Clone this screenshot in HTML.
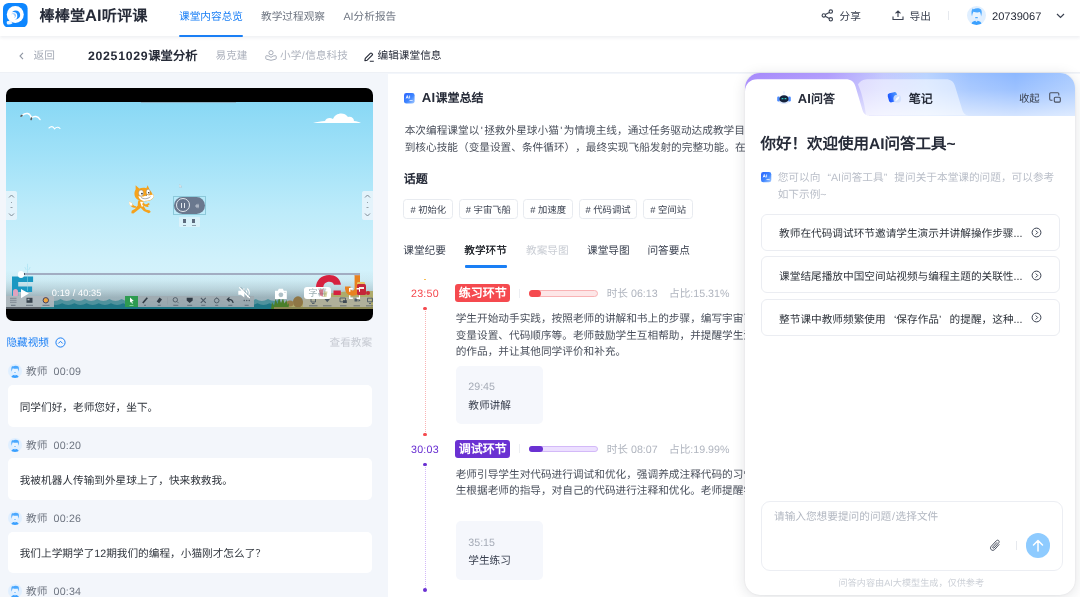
<!DOCTYPE html>
<html lang="zh-CN">
<head>
<meta charset="utf-8">
<title>棒棒堂AI听评课</title>
<style>
*{box-sizing:border-box;margin:0;padding:0}
html,body{width:1080px;height:597px;overflow:hidden;background:#f3f6fb;font-family:"Liberation Sans",sans-serif;color:#1f2329;font-size:10.67px;text-rendering:geometricPrecision;text-spacing-trim:space-all}
.abs{position:absolute;white-space:nowrap}
.t{position:absolute;white-space:nowrap;font-size:10.67px;line-height:14px;height:14px}
.b{font-weight:bold}
#hdr{position:absolute;left:0;top:0;width:1080px;height:36px;background:#fff;box-shadow:0 2px 3px rgba(40,60,100,.075);z-index:5}
#sub{position:absolute;left:0;top:36px;width:1080px;height:37px;background:#fff;border-bottom:1px solid #eef1f6}
#left{position:absolute;left:0;top:73px;width:381px;height:524px;background:#f3f6fb;overflow:hidden}
#mid{position:absolute;left:387.5px;top:73.5px;width:693px;height:524px;background:#fff;overflow:hidden}
#ai{position:absolute;left:745.4px;top:73px;width:330px;height:521.7px;background:#fff;border-radius:15px;box-shadow:0 2px 14px rgba(20,30,50,.13),0 0 2px rgba(20,30,50,.08);overflow:hidden;z-index:4}
.av{position:absolute;width:14px;height:14px}
.card{position:absolute;left:7.5px;width:364px;height:41.5px;background:#fff;border-radius:5px}
.tag{position:absolute;top:125.5px;height:20px;border:1px solid #e8ebf0;border-radius:3.5px;font-size:9.33px;line-height:18px;padding-top:1px;text-align:center;color:#3a4150;white-space:nowrap;overflow:hidden}
.p{position:absolute;font-size:10.67px;color:#4a505c;white-space:nowrap;overflow:hidden}
.fw{display:inline-block;width:1em}
.hq{display:inline-block;width:.46em;text-align:center}
.sug{position:absolute;left:15.6px;width:298.6px;height:37px;border:1px solid #ebedf2;border-radius:6px;background:#fff}
</style>
</head>
<body>
<div id="wrap" style="position:absolute;left:0;top:0;width:1080px;height:597px;overflow:hidden;will-change:transform">

<div id="hdr">
  <svg class="abs" style="left:3px;top:2.800px" width="24.600" height="24.600" viewBox="0 0 24.600 24.600">
    <rect x="0" y="0" width="24.600" height="24.600" rx="5.500" fill="#0d86ff"/>
    <circle cx="12.300" cy="11.600" r="8.500" fill="#fff"/>
    <path d="M4 18.200L7.800 17.500L9.500 20.500C7.500 21.600 5.500 21.800 4.200 21.300C3.600 20.300 3.600 19.200 4 18.200z" fill="#eef6ff"/>
    <circle cx="12.700" cy="11.900" r="4.500" fill="#1a8cff"/>
    <circle cx="10.400" cy="13" r="3.900" fill="#fff"/>
    <circle cx="10.600" cy="12.600" r="2.400" fill="#8cc3ff"/>
    <circle cx="9.500" cy="13.300" r="2.200" fill="#fff"/>
  </svg>
  <div id="title" class="abs b" style="left:39.5px;top:6.2px;font-size:15.2px;line-height:21px;color:#262b38">棒棒堂<span style="font-size:1.09em;letter-spacing:.1px;line-height:1">AI</span>听评课</div>
  <div id="tab1" class="t" style="left:179px;top:9.700px;color:#1a7ff5">课堂内容总览</div>
  <div class="abs" style="left:179px;top:34.5px;width:64px;height:2.200px;background:#1a7ff5;border-radius:1px"></div>
  <div id="tab2" class="t" style="left:261px;top:9.700px;color:#6f7682">教学过程观察</div>
  <div id="tab3" class="t" style="left:343.5px;top:9.700px;color:#6f7682">AI分析报告</div>
  <svg class="abs" style="left:821px;top:9px" width="13" height="13" viewBox="0 0 13 13" fill="none" stroke="#3a4150" stroke-width="1.100"><circle cx="9.800" cy="2.600" r="1.700"/><circle cx="2.800" cy="6.400" r="1.700"/><circle cx="9.800" cy="10.300" r="1.700"/><path d="M4.300 5.600L8.300 3.400M4.300 7.200L8.300 9.500"/></svg>
  <div id="share" class="t" style="left:839.5px;top:9.700px;color:#3a4150">分享</div>
  <svg class="abs" style="left:891.5px;top:10px" width="12" height="11" viewBox="0 0 12 11" fill="none" stroke="#3a4150" stroke-width="1.100"><path d="M1 6.500V9.500H11V6.500M6 7V1M3.500 3.300L6 .9L8.500 3.300"/></svg>
  <div id="export" class="t" style="left:909.5px;top:9.700px;color:#3a4150">导出</div>
  <div class="abs" style="left:948px;top:11px;width:1px;height:9px;background:#e6e9ee"></div>
  <svg class="abs" style="left:967px;top:6px" width="19" height="19" viewBox="0 0 20 20"><defs><clipPath id="ch"><circle cx="10" cy="10" r="10"/></clipPath></defs><circle cx="10" cy="10" r="10" fill="#e0efff"/><g clip-path="url(#ch)"><path d="M4 21C4 17.500 6.500 15.500 10 15.300C13.500 15.500 16 17.500 16 21z" fill="#3aa0ff"/><path d="M8.800 13.500h2.400v2.200L10 16.800L8.800 15.700z" fill="#dcecff"/><ellipse cx="10" cy="9.300" rx="3.700" ry="4.400" fill="#e9f4ff"/><path d="M5.300 11C4.300 7.500 4.600 4.300 6 2.700L7 3.500C9 2.100 13 2.100 14.800 3.700C15.900 5.500 15.700 8.500 14.800 11C14.700 8.800 14.200 7.300 13.500 6.400C11.500 7 8.700 6.800 6.800 6C6 7.300 5.500 8.800 5.300 11z" fill="#4aa8ff"/><ellipse cx="10" cy="12.300" rx="1.700" ry=".6" fill="#4aa8ff"/></g></svg>
  <div id="uid" class="t" style="left:992px;top:9.700px;font-size:11.1px;color:#262b38">20739067</div>
  <svg class="abs" style="left:1056px;top:13px" width="9" height="6" viewBox="0 0 9 6" fill="none" stroke="#3a4150" stroke-width="1.200"><path d="M1 1L4.500 4.500L8 1"/></svg>
</div>
<div id="sub">
  <svg class="abs" style="left:19px;top:15.500px" width="5" height="8" viewBox="0 0 5 8" fill="none" stroke="#8f96a3" stroke-width="1.100"><path d="M4 .8L1 4L4 7.200"/></svg>
  <div id="back" class="t" style="left:33.5px;top:13px;color:#a5abb6">返回</div>
  <div id="ctitle" class="abs b" style="left:88px;top:10.5px;font-size:12.3px;line-height:18px;color:#262b38"><span style="letter-spacing:.7px">20251029</span>课堂分析</div>
  <div id="tname" class="t" style="left:215.5px;top:13px;color:#aeb3be">易克建</div>
  <svg class="abs" style="left:265.300px;top:13.800px" width="12" height="11" viewBox="0 0 12 11" fill="none" stroke="#a6acb8" stroke-width="1" stroke-linejoin="round"><circle cx="6" cy="2.700" r="2.100"/><path d="M.8 6.300Q.8 5.700 1.400 5.700L3.900 6L6 7.400L8.100 6L10.600 5.700Q11.200 5.700 11.200 6.300V8.500Q11.200 9.100 10.600 9.200L6 10.300L1.400 9.200Q.8 9.100 .8 8.500z"/></svg>
  <div id="subj" class="t" style="left:280px;top:13px;color:#aeb3be">小学<span style="padding:0 .5px">/</span>信息科技</div>
  <svg class="abs" style="left:364px;top:15.700px" width="10.500" height="10" viewBox="0 0 10.500 10" fill="none" stroke="#262b38" stroke-width="1.150" stroke-linejoin="round"><path d="M1.300 6.300L6.300 1.300Q7 .6 7.700 1.300L8.200 1.800Q8.900 2.500 8.200 3.200L3.200 8.200L.9 8.700zM5.800 9.200H9.800"/></svg>
  <div id="edit" class="t" style="left:377.5px;top:13px;color:#262b38">编辑课堂信息</div>
</div>

<div id="left">

  <div id="vid" style="position:absolute;left:6px;top:15px;width:367px;height:233px;background:#000;border-radius:7px;overflow:hidden">
    <div id="sky" style="position:absolute;left:0;top:13.5px;width:367px;height:207.2px;background:linear-gradient(180deg,#89d8f5 0%,#a2e2f8 27%,#bcebfa 52%,#d0f1fb 76%,#dbf5fc 100%);overflow:hidden">
      <!-- top thin gray line -->
      <div class="abs" style="left:135px;top:0;width:95px;height:1px;background:#8a9aa6;opacity:.6"></div>
      <!-- birds -->
      <svg class="abs" style="left:14px;top:9px" width="48" height="22" viewBox="0 0 48 22" fill="none" stroke="#fff" stroke-width="1.500" stroke-linecap="round"><path d="M2 4.500C6 1 10 2 11.500 7C14 4.500 18 5 20 8.500"/><path d="M2 4.500l-1 .6M11.500 7l-.4 1.500" stroke="#555"/><path d="M29 17c2-2 4-2 5.500.8c2-2 4-2 5.500-.3" stroke-width="1.100"/></svg>
      <!-- cloud -->
      <svg class="abs" style="left:306px;top:8px" width="50" height="14" viewBox="0 0 50 14"><path d="M1 13c4-1.500 8-1.500 12-2c1-3 5-4 8-2c2-6 11-8 15-2c3-1 6 1 6 4c3 0 5 1 7 2z" fill="#fff"/></svg>
      <!-- side widgets -->
      <div class="abs" style="left:0;top:89px;width:11px;height:29px;background:rgba(235,245,250,.85);border-radius:0 2px 2px 0"></div>
      <div class="abs" style="left:356px;top:89px;width:11px;height:29px;background:rgba(235,245,250,.85);border-radius:2px 0 0 2px"></div>
      <svg class="abs" style="left:2px;top:91px" width="7" height="25" viewBox="0 0 7 25" fill="none" stroke="#7c8a96" stroke-width="1"><path d="M1 4.500L3.500 2L6 4.500M1 20.500L3.500 23L6 20.500"/><path d="M3 9.500h1M2.500 14.500h2" stroke-width=".8"/></svg>
      <svg class="abs" style="left:358px;top:91px" width="7" height="25" viewBox="0 0 7 25" fill="none" stroke="#7c8a96" stroke-width="1"><path d="M1 4.500L3.500 2L6 4.500M1 20.500L3.500 23L6 20.500"/><path d="M3 9.500h1M2.500 14.500h2" stroke-width=".8"/></svg>
      <!-- cat -->
      <svg class="abs" style="left:121.500px;top:81.700px" width="27.500" height="32.300" viewBox="0 0 27 30" preserveAspectRatio="none">
        <path d="M8 21.500C6 21.500 4.500 20 3.800 18.500L1.200 17.200C.8 19 1.500 20.800 3 21.500C4.500 23 6.500 23.300 8.500 23z" fill="#f5a21c"/>
        <path d="M1.200 17.200L3.800 18.500L4.600 20.800L2.500 21.200C1.300 20.300 .9 18.800 1.200 17.200z" fill="#fff"/>
        <path d="M9.500 21L7 24L3.600 25.800L3.300 28L5.300 28.400L8.500 26L12.500 23z" fill="#f5a21c"/>
        <path d="M12 22.500L15.500 26L20.500 28L22.300 27L21.500 25.500L17.500 24.500L15 21z" fill="#f5a21c"/>
        <path d="M10.300 16C9.300 18.500 9.300 21 10.500 23.500L15 22.500C15.800 20.500 15.500 18.500 14.800 16.500z" fill="#f5a21c"/>
        <path d="M11.800 17.500L13.500 22L15 21.500L15 17.500z" fill="#fff"/>
        <path d="M14.500 18.200L17.500 20L20.500 18.600L21.400 19.800L19.500 20.800L20.500 21.500L19.300 22.300L17 21.800L14 20.500z" fill="#f5a21c"/>
        <path d="M7.500 2L11 5C13.500 4.200 16 4.200 18 4.800L19.300 2L21.300 6.500C22.500 7.500 23.500 9 24 10.500C25 10.800 25.500 11.500 25.300 12.500C24.500 15.500 20.500 17 16 17C11.500 17 7.300 15 6.500 11.500C6 9.500 6.500 7.500 7.500 6z" fill="#f5a21c"/>
        <path d="M10.300 12C10.800 15.500 14 16.800 17.500 16.600C21 16.400 24.300 15 25.200 12.500C25.300 11.500 24.800 10.900 24 10.600C22.500 11.500 20.500 11.500 19 10.800C17 12.500 13 13 10.300 12z" fill="#fff"/>
        <ellipse cx="12.800" cy="9.300" rx="2.400" ry="2.800" fill="#fff" stroke="#555" stroke-width=".3"/>
        <ellipse cx="19.800" cy="8.400" rx="1.900" ry="2.600" fill="#fff" stroke="#555" stroke-width=".3"/>
        <circle cx="13.700" cy="9.800" r=".8" fill="#222"/><circle cx="20.300" cy="9" r=".7" fill="#222"/>
        <path d="M17.300 11.300L18.500 11L18 12z" fill="#333"/>
        <path d="M12.800 13.300C15 15.300 19.500 15 22 12.700" fill="none" stroke="#444" stroke-width=".45"/>
      </svg>
      <!-- cursor -->
      <svg class="abs" style="left:173.300px;top:82.300px" width="3.300" height="4.600" viewBox="0 0 5 7"><path d="M.5.500V5.500L2 4.200L3 6.500L3.800 6.100L2.800 3.900H4.500z" fill="#e8f1f6" stroke="#9fb0bb" stroke-width=".4"/></svg>
      <!-- pill -->
      <div class="abs" style="left:167.300px;top:94.500px;width:32.600px;height:18.700px;border:0.600px solid #8cc9da"></div>
      <div class="abs" style="left:168.300px;top:95.400px;width:30.600px;height:16.900px;border-radius:9px;background:#6a788e"></div>
      <div class="abs" style="left:170px;top:96.900px;width:13.800px;height:13.800px;border-radius:7px;border:1px solid #e4e9ef;background:#65738a"></div>
      <div class="abs" style="left:175px;top:101.100px;width:1.200px;height:5.500px;background:#e4e9ef"></div>
      <div class="abs" style="left:177.600px;top:101.100px;width:1.200px;height:5.500px;background:#e4e9ef"></div>
      <svg class="abs" style="left:188.500px;top:101.500px" width="5" height="6" viewBox="0 0 5 6" fill="none" stroke="#cfd6df" stroke-width=".8"><path d="M1 3h3M3 .800v4.400M1.500 1.500L.8 3l.7 1.500"/></svg>
      <!-- small buttons -->
      <div class="abs" style="left:173.300px;top:115.300px;width:20.400px;height:10px;background:rgba(225,243,250,.75);border-radius:1px"></div>
      <div class="abs" style="left:176.500px;top:117.500px;width:3.500px;height:3.800px;background:#5d6b7d"></div>
      <div class="abs" style="left:186.300px;top:117.500px;width:3px;height:3.800px;background:#5d6b7d"></div>
      <div class="abs" style="left:176.500px;top:123px;width:3.500px;height:1.200px;background:#8fa0ae"></div>
      <div class="abs" style="left:186px;top:123px;width:3.500px;height:1.200px;background:#8fa0ae"></div>

      <!-- bottom scene -->
      <!-- dark control gradient -->
      <div class="abs" style="left:0;top:168px;width:367px;height:40px;background:linear-gradient(180deg,rgba(20,30,40,0) 0%,rgba(20,30,40,.04) 25%,rgba(20,30,40,.15) 48%,rgba(20,30,40,.3) 68%,rgba(20,30,40,.36) 100%)"></div>
      <svg class="abs" style="left:0;top:0" width="367" height="208" viewBox="0 0 367 208">
        <path d="M42.400 207.500V197.100q6.100 3.800 12.200 0q6.100 3.800 12.200 0q6.100 3.800 12.200 0q6.100 3.800 12.200 0q6.100 3.800 12.200 0q6.100 3.800 12.200 0q6.100 3.800 12.200 0q6.100 3.800 12.200 0q6.100 3.800 12.200 0q6.100 3.800 12.200 0q6.100 3.800 12.200 0q6.100 3.800 12.200 0q6.100 3.800 12.200 0q6.100 3.800 12.200 0q6.100 3.800 12.200 0q6.100 3.800 12.200 0q6.100 3.800 12.200 0q6.100 3.800 12.200 0q6.100 3.800 12.200 0V207.500z" fill="#4f929d"/>
        <path d="M44 207.500V201.300q6.100 3.400 12.200 0q6.100 3.400 12.200 0q6.100 3.400 12.200 0q6.100 3.400 12.200 0q6.100 3.400 12.200 0q6.100 3.400 12.200 0q6.100 3.400 12.200 0q6.100 3.400 12.200 0q6.100 3.400 12.200 0q6.100 3.400 12.200 0q6.100 3.400 12.200 0q6.100 3.400 12.200 0q6.100 3.400 12.200 0q6.100 3.400 12.200 0q6.100 3.400 12.200 0q6.100 3.400 12.200 0q6.100 3.400 12.200 0q6.100 3.400 12.200 0q6.100 3.400 12.200 0V207.500z" fill="#1f7787"/>
        <path d="M268 207.5L279 203.0L297 199.0L314 194.0L329 190.5L344 189.3L367 189.0L367 207.5z" fill="#aeab6c"/>
        <ellipse cx="292" cy="200" rx="5" ry="5.800" fill="#8f7645"/>
        <ellipse cx="284" cy="201.500" rx="3.500" ry="3" fill="#977e4c"/>
        <path d="M265 207.500L266 200L268 204L269.500 197L271.500 202L273 196L275 201L277 196.500L278.500 201.500L280.500 198L281.500 203L283 201L282.500 207.500z" fill="#4a7f2a"/>
      </svg>
      <!-- C red -->
      <svg class="abs" style="left:309.500px;top:173.500px" width="25" height="24" viewBox="0 0 25 24"><path d="M24.800 8.800C23.600 3.300 19.300 0 13.300 0C5.300 0 0 5.300 0 12.500C0 18.500 3 22.500 7 24H14.500C10 23.500 7.300 19.500 7.300 13C7.300 9 9.800 6.800 13.300 6.800C15.800 6.800 17.300 8 18 9.800L24.800 9.800z" fill="#d6213f"/><path d="M17.500 15.500H24.800V20H17.500z" fill="#d6213f"/></svg>
      <!-- J orange -->
      <svg class="abs" style="left:338.800px;top:171px" width="15.500" height="23" viewBox="0 0 15.500 23"><path d="M9.600 0H15.200V15C15.200 20 12 22.700 7.800 22.700C3.500 22.700 .5 20.300 0 15.800L0 13.500H5.500V15.500C5.700 16.800 6.500 17.400 7.600 17.400C8.900 17.400 9.600 16.500 9.600 15z" fill="#e8811f"/><path d="M9.600 0H15.200V2.500H9.600z" fill="#d9a07a"/></svg>
      <!-- jar -->
      <div class="abs" style="left:350.500px;top:182.500px;width:9.500px;height:10.700px;background:#c5263a;border-radius:1.500px"></div>
      <div class="abs" style="left:351.300px;top:180.300px;width:8px;height:2.600px;background:#e6c565;border-radius:1.200px 1.200px 0 0"></div>
      <div class="abs" style="left:352.500px;top:185px;width:5.500px;height:2.600px;background:#f4ece4"></div>
      <div class="abs" style="left:359.500px;top:189.300px;width:4px;height:4.500px;background:#c32a36;border-radius:2px"></div>
      <!-- F teal -->
      <svg class="abs" style="left:5.900px;top:160px" width="22" height="36" viewBox="0 0 22 36"><path d="M0 14.400H21.100V20H6.200V24.600H20.100V29.900H6.200V33.700H0z" fill="#1a98c2"/><path d="M15.500 14.400V4M12.800 5l1.500 3M18.200 5l-1.500 3M15.500 1.800v2.500M15.500 14.400V29" stroke="#9adcee" stroke-width=".6" fill="none" opacity=".8"/></svg>
      <div class="abs" style="left:6.600px;top:187.700px;width:5.600px;height:6.600px;background:#dfa3bf;border-radius:3px 3px 1px 1px"></div>
      <!-- toolbars -->
      <div class="abs" style="left:0;top:194.500px;width:48.300px;height:10.900px;background:rgba(176,184,190,.92)"></div>
      <div class="abs" style="left:0;top:205.300px;width:35px;height:2px;background:#5b6168"></div>
      <div class="abs" style="left:35px;top:205.300px;width:13.300px;height:2px;background:#2a7f8c"></div>
      <div class="abs" style="left:118.700px;top:194.300px;width:13.600px;height:11.400px;background:#2e9b51"></div>
      <div class="abs" style="left:132.300px;top:194.300px;width:116px;height:11.400px;background:rgba(160,171,178,.93)"></div>
      <div class="abs" style="left:297px;top:195.200px;width:67.500px;height:10.600px;background:rgba(176,176,158,.92)"></div>
      <div class="abs" style="left:268px;top:205.800px;width:99px;height:1.500px;background:#8a8752"></div>
      <svg class="abs" style="left:0;top:194.500px" width="367" height="13" viewBox="0 0 367 13" fill="none" stroke="#4c5964" stroke-width=".9">
        <path d="M4 2.300h6.500M4 4.300h6.500M4 6.300h6.500" stroke="#7a858e"/><path d="M5 9.300h4.500" stroke-width=".7"/>
        <rect x="20.500" y="1.800" width="6" height="5" fill="#37424d" stroke="none"/><rect x="21.500" y="2.800" width="2" height="1.500" fill="#aab3ba" stroke="none"/><path d="M20 9.300h7" stroke-width=".7"/>
        <circle cx="39.800" cy="4.300" r="2.700" fill="#f0a53c" stroke="#3d3f63" stroke-width="1"/><path d="M36.500 9.300h7" stroke-width=".7"/>
        <path d="M124 1.500l3.800 3.500-1.900.2 1 2.100-.9.400-1-2.100-1 1.100z" fill="#fff" stroke="none"/><path d="M123.500 9.500h4" stroke="#8fe0a5" stroke-width=".8"/>
        <path d="M161.500 1.500v7" stroke="#8f9aa2" stroke-width=".5"/>
        <g transform="translate(139,0)"><path d="M-2.200 7L2.300 1.800" stroke="#2f3a44" stroke-width="1.600"/><path d="M-1 9.300h2" stroke-width=".7"/></g><g transform="translate(153.2,0)"><path d="M-2.500 5.500L.3 1.500L2.800 3.500L0 7.300z" fill="#2f3a44" stroke="none"/><path d="M-1.500 9.300h3" stroke-width=".7"/></g><g transform="translate(169.8,0)"><circle cx="-.5" cy="3.800" r="2.200"/><path d="M1.200 5.500L2.800 7.200M-2.500 9.300h5" stroke-width=".7"/></g><g transform="translate(183.7,0)"><path d="M-3 1.800h6v2.700L0 7L-3 4.500z" fill="#2f3a44" stroke="none"/><path d="M-2.500 9.300h5" stroke-width=".7"/></g><g transform="translate(197.3,0)"><path d="M-2.500 1.800L2.500 6.800M2.500 1.800L-2.500 6.800" stroke-width="1.100"/><path d="M-2 9.300h4" stroke-width=".7"/></g><g transform="translate(210.7,0)"><circle cx="0" cy="4.600" r="2.300"/><path d="M0 2.300V1.200M-1.500 9.300h3" stroke-width=".7"/></g><g transform="translate(224.3,0)"><path d="M2.800 7C2.300 4.300 .5 3.300-2 3.500M-.8 1.500L-3 3.500L-.8 5.500" stroke="#2f3a44" stroke-width="1.200"/><path d="M-2 9.300h4" stroke-width=".7"/></g><g transform="translate(240.7,0)"><path d="M-2.500 4.500h.1M0 4.500h.1M2.500 4.500h.1" stroke-width="1.300" stroke-linecap="round"/><path d="M-2 9.300h4" stroke-width=".7"/></g>
        <path d="M305 2.500h4.500v3.500H305zM306 7.500h2.500"/><path d="M303 9.800h8.500" stroke-width=".7"/>
        <path d="M318.500 3h5.500l-2.750 3.200z" fill="#4c5964" stroke="none"/><path d="M317 9.800h8.500" stroke-width=".7"/>
        <path d="M334 2h5.500v3.800H334z"/><rect x="337" y="4.200" width="3.800" height="2.800" fill="#3f4a54" stroke="none"/><path d="M334 9.800h6.500" stroke-width=".7"/>
        <path d="M348.500 2.500h3v3h-3zM352.500 3.200l2 1.300-2 1.300z" fill="#4c5964" stroke="none"/><path d="M347.500 9.800h6.500" stroke-width=".7"/>
        <path d="M361.500 2.200h5v3.600h-5zM363 7.500h2"/><path d="M360 9.800h8" stroke-width=".7"/>
      </svg>
      <!-- progress bar -->
      <div class="abs" style="left:15px;top:171.800px;width:338.500px;height:2.200px;background:#a2adc2;border-radius:1px"></div>
      <div class="abs" style="left:17px;top:171.800px;width:2px;height:2.200px;background:#4a5666"></div>
      <div class="abs" style="left:11.600px;top:169.500px;width:6.600px;height:6.600px;background:#fff;border-radius:4px"></div>
      <!-- play -->
      <svg class="abs" style="left:15.300px;top:187.200px" width="8" height="9.200" viewBox="0 0 8 9.200"><path d="M0 0L7.900 4.600L0 9.200z" fill="#fff"/></svg>
      <div id="vtime" class="abs" style="left:45.800px;top:186.500px;font-size:9.200px;line-height:10px;color:#fff;letter-spacing:.1px">0:19 / 40:35</div>
      <!-- mute -->
      <svg class="abs" style="left:232px;top:185.500px" width="13" height="11.500" viewBox="0 0 13 11.500"><path d="M.3 3.800H2.800L6.300 1V10.500L2.800 7.700H.3z" fill="#fff"/><path d="M7.800 3.500c1.300 1.200 1.300 3.300 0 4.500M9.300 1.500c2.700 2.300 2.700 6.200 0 8.500" fill="none" stroke="#fff" stroke-width="1.100"/><path d="M1.300 .3L11.800 11" stroke="#fff" stroke-width="1.300"/><path d="M2.200 -.3L12.700 10.400" stroke="#7f97a1" stroke-width=".7"/></svg>
      <!-- camera -->
      <svg class="abs" style="left:269px;top:186px" width="12" height="11.300" viewBox="0 0 12 11.300"><path d="M0 2.800H2.800L3.800 .8H7.800L8.800 2.800H11.800V11.200H0z" fill="#fff"/><circle cx="5.900" cy="6.800" r="2.400" fill="#aebfc6"/><circle cx="10" cy="4.300" r=".6" fill="#aebfc6"/></svg>
      <!-- subtitle button -->
      <div class="abs" style="left:297.900px;top:185.700px;width:27.600px;height:12.200px;background:#fff;border-radius:3px"></div>
      <div class="abs" style="left:302.300px;top:186.600px;font-size:9.300px;line-height:11px;color:#9fb0b4">字幕</div>
      <svg class="abs" style="left:309px;top:185.500px" width="17" height="13" viewBox="0 0 17 13"><path d="M4.200 3C5.300 2.300 6.800 2 8.300 2.200L7.800 9.500C6.800 9.300 5.800 9 5 8.500z" fill="#d6213f" opacity=".5"/><path d="M9 4.500h3.500l-1 5.500h-3z" fill="#b9b45f" opacity=".55"/></svg>
      <!-- fullscreen -->
      <svg class="abs" style="left:342.900px;top:186.500px" width="11.400" height="11" viewBox="0 0 11.400 11" fill="none" stroke="#fff" stroke-width="1.400"><path d="M.7 3.800V.7H3.800M7.600 .7H10.700V3.800M10.700 7.200V10.300H7.600M3.800 10.300H.7V7.200"/></svg>
    </div>
  </div>

  <div id="hidev" class="t" style="left:6.400px;top:263.300px;color:#1a7ff5">隐藏视频</div>
  <svg class="abs" style="left:54.800px;top:263.500px" width="11" height="11" viewBox="0 0 11 11"><circle cx="5.500" cy="5.500" r="4.600" fill="none" stroke="#1a7ff5" stroke-width="1"/><path d="M3.300 6.500L5.500 4.300L7.700 6.500" fill="none" stroke="#1a7ff5" stroke-width="1"/></svg>
  <div id="viewplan" class="t" style="left:329.500px;top:263.300px;color:#c6cad2">查看教案</div>
  <svg class="abs" style="left:8px;top:291.3px" width="14" height="14" viewBox="0 0 20 20"><defs><clipPath id="ct1"><circle cx="10" cy="10" r="10"/></clipPath></defs><circle cx="10" cy="10" r="10" fill="#e0efff"/><g clip-path="url(#ct1)"><path d="M4 21C4 17.500 6.500 15.500 10 15.300C13.500 15.500 16 17.500 16 21z" fill="#3aa0ff"/><path d="M8.800 13.500h2.400v2.200L10 16.800L8.800 15.700z" fill="#dcecff"/><ellipse cx="10" cy="9.300" rx="3.700" ry="4.400" fill="#e9f4ff"/><path d="M5.300 11C4.300 7.500 4.600 4.300 6 2.700L7 3.500C9 2.100 13 2.100 14.800 3.700C15.900 5.500 15.700 8.500 14.800 11C14.700 8.800 14.200 7.300 13.500 6.400C11.500 7 8.700 6.800 6.800 6C6 7.300 5.500 8.800 5.300 11z" fill="#4aa8ff"/><ellipse cx="10" cy="12.300" rx="1.700" ry=".6" fill="#4aa8ff"/></g></svg><div class="t" style="left:26px;top:292.3px;color:#6f7682">教师</div><div class="t" style="left:53.5px;top:292.3px;color:#6f7682;letter-spacing:.2px">00:09</div><div class="card" style="top:312.0px"><div class="t" style="left:12.2px;top:15.5px;color:#2f343c">同学们好，老师您好，坐下。</div></div>
  <svg class="abs" style="left:8px;top:364.6px" width="14" height="14" viewBox="0 0 20 20"><defs><clipPath id="ct2"><circle cx="10" cy="10" r="10"/></clipPath></defs><circle cx="10" cy="10" r="10" fill="#e0efff"/><g clip-path="url(#ct2)"><path d="M4 21C4 17.500 6.500 15.500 10 15.300C13.500 15.500 16 17.500 16 21z" fill="#3aa0ff"/><path d="M8.800 13.500h2.400v2.200L10 16.800L8.800 15.700z" fill="#dcecff"/><ellipse cx="10" cy="9.300" rx="3.700" ry="4.400" fill="#e9f4ff"/><path d="M5.300 11C4.300 7.500 4.600 4.300 6 2.700L7 3.500C9 2.100 13 2.100 14.800 3.700C15.900 5.500 15.700 8.500 14.800 11C14.700 8.800 14.200 7.300 13.500 6.400C11.500 7 8.700 6.800 6.800 6C6 7.300 5.500 8.800 5.300 11z" fill="#4aa8ff"/><ellipse cx="10" cy="12.300" rx="1.700" ry=".6" fill="#4aa8ff"/></g></svg><div class="t" style="left:26px;top:365.6px;color:#6f7682">教师</div><div class="t" style="left:53.5px;top:365.6px;color:#6f7682;letter-spacing:.2px">00:20</div><div class="card" style="top:385.3px"><div class="t" style="left:12.2px;top:15.5px;color:#2f343c">我被机器人传输到外星球上了，快来救救我。</div></div>
  <svg class="abs" style="left:8px;top:437.9px" width="14" height="14" viewBox="0 0 20 20"><defs><clipPath id="ct3"><circle cx="10" cy="10" r="10"/></clipPath></defs><circle cx="10" cy="10" r="10" fill="#e0efff"/><g clip-path="url(#ct3)"><path d="M4 21C4 17.500 6.500 15.500 10 15.300C13.500 15.500 16 17.500 16 21z" fill="#3aa0ff"/><path d="M8.800 13.500h2.400v2.200L10 16.800L8.800 15.700z" fill="#dcecff"/><ellipse cx="10" cy="9.300" rx="3.700" ry="4.400" fill="#e9f4ff"/><path d="M5.300 11C4.300 7.500 4.600 4.300 6 2.700L7 3.500C9 2.100 13 2.100 14.800 3.700C15.900 5.500 15.700 8.500 14.800 11C14.700 8.800 14.200 7.300 13.500 6.400C11.500 7 8.700 6.800 6.800 6C6 7.300 5.500 8.800 5.300 11z" fill="#4aa8ff"/><ellipse cx="10" cy="12.300" rx="1.700" ry=".6" fill="#4aa8ff"/></g></svg><div class="t" style="left:26px;top:438.9px;color:#6f7682">教师</div><div class="t" style="left:53.5px;top:438.9px;color:#6f7682;letter-spacing:.2px">00:26</div><div class="card" style="top:458.59999999999997px"><div class="t" style="left:12.2px;top:15.5px;color:#2f343c">我们上学期学了12期我们的编程，小猫刚才怎么了？</div></div>
  <svg class="abs" style="left:8px;top:511.20000000000005px" width="14" height="14" viewBox="0 0 20 20"><defs><clipPath id="ct4"><circle cx="10" cy="10" r="10"/></clipPath></defs><circle cx="10" cy="10" r="10" fill="#e0efff"/><g clip-path="url(#ct4)"><path d="M4 21C4 17.500 6.500 15.500 10 15.300C13.500 15.500 16 17.500 16 21z" fill="#3aa0ff"/><path d="M8.800 13.500h2.400v2.200L10 16.800L8.800 15.700z" fill="#dcecff"/><ellipse cx="10" cy="9.300" rx="3.700" ry="4.400" fill="#e9f4ff"/><path d="M5.300 11C4.300 7.500 4.600 4.300 6 2.700L7 3.500C9 2.100 13 2.100 14.800 3.700C15.900 5.500 15.700 8.500 14.800 11C14.700 8.800 14.200 7.300 13.500 6.400C11.500 7 8.700 6.800 6.800 6C6 7.300 5.500 8.800 5.300 11z" fill="#4aa8ff"/><ellipse cx="10" cy="12.300" rx="1.700" ry=".6" fill="#4aa8ff"/></g></svg><div class="t" style="left:26px;top:512.2px;color:#6f7682">教师</div><div class="t" style="left:53.5px;top:512.2px;color:#6f7682;letter-spacing:.2px">00:34</div>
</div>
<div id="mid">
  <svg class="abs" style="left:16.2px;top:19.0px" width="11" height="11" viewBox="0 0 11 11"><defs><linearGradient id="gai" x1="0" y1="0" x2="1" y2="1"><stop offset="0" stop-color="#2a63ff"/><stop offset=".55" stop-color="#3f86ff"/><stop offset="1" stop-color="#a9cdff"/></linearGradient></defs><rect width="10.600" height="10.600" rx="2.300" fill="url(#gai)"/><path d="M2.200 5.500L3.300 2.600L4.400 5.500M2.600 4.600h1.400M5.600 2.600v2.900" stroke="#fff" stroke-width=".8" fill="none"/><path d="M5.500 7.500h3.200" stroke="#dce9ff" stroke-width=".9"/></svg>
  <div id="sumt" class="abs b" style="left:34.3px;top:16.5px;font-size:12px;line-height:16px;color:#262b38"><span style="font-size:1.1em;letter-spacing:.2px;line-height:1">AI</span>课堂总结</div>
  <div class="p" style="left:17.2px;top:50.2px;width:500px;height:14px;line-height:14px">本次编程课堂以<span class="hq">'</span>拯救外星球小猫<span class="hq">'</span>为情境主线，通过任务驱动达成教学目标，学生从创意设计</div>
  <div class="p" style="left:17.2px;top:67.5px;width:500px;height:14px;line-height:14px">到核心技能（变量设置、条件循环），最终实现飞船发射的完整功能。在整个教学过程中，教师</div>
  <div id="topic" class="abs b" style="left:16.2px;top:97.0px;font-size:12px;line-height:16px;color:#262b38">话题</div>
  <div style="position:absolute;left:0;top:0">
  <div class="tag" style="left:15.8px;width:50.0px"># 初始化</div><div class="tag" style="left:71.5px;width:58.8px"># 宇宙飞船</div><div class="tag" style="left:135.8px;width:49.8px"># 加速度</div><div class="tag" style="left:191.2px;width:58.7px"># 代码调试</div><div class="tag" style="left:255.8px;width:49.8px"># 空间站</div>
  </div>
  <div id="mt1" class="t" style="left:15.8px;top:170.5px;color:#3a4150">课堂纪要</div>
  <div id="mt2" class="t" style="left:76.8px;top:170.5px;color:#1f2329;text-shadow:0 0 .2px #1f2329">教学环节</div>
  <div class="abs" style="left:77.0px;top:191.9px;width:42.500px;height:2.200px;border-radius:1.100px;background:#1a7ff5"></div>
  <div id="mt3" class="t" style="left:138.5px;top:170.5px;color:#c9cdd4">教案导图</div>
  <div id="mt4" class="t" style="left:199.5px;top:170.5px;color:#3a4150">课堂导图</div>
  <div id="mt5" class="t" style="left:259.9px;top:170.5px;color:#3a4150">问答要点</div>
  <div class="abs" style="left:36.3px;top:205.8px;width:2.400px;height:1.200px;border-radius:1px;background:#f7b53c"></div>
  <div class="t" style="left:23.5px;top:213.9px;color:#f54a4f;font-size:10.670px;letter-spacing:.25px">23:50</div><div class="abs b" style="left:67.8px;top:210.7px;width:55px;height:18px;background:#f54a4f;border-radius:3px;color:#fff;font-size:12px;line-height:19.5px;text-align:center;overflow:hidden">练习环节</div><div class="abs" style="left:131.5px;top:215.2px;width:1px;height:9px;background:#eceef2"></div><div class="abs" style="left:141.3px;top:216.5px;width:69px;height:6.600px;border-radius:4px;background:#fde6e7;border:0.800px solid #f9b3b5"></div><div class="abs" style="left:141.3px;top:216.5px;width:12px;height:6.600px;border-radius:4px;background:#f54a4f"></div><div class="t" style="left:219.2px;top:213.9px;color:#b0b5bf">时长 06:13</div><div class="t" style="left:281.5px;top:213.9px;color:#b0b5bf">占比:15.31%</div><div class="abs" style="left:35.8px;top:233.5px;width:3.400px;height:3.400px;border-radius:2px;background:#f54a4f"></div><div class="abs" style="left:37.0px;top:237.7px;width:0;height:121px;border-left:1px dotted #f9b3b5"></div><div class="abs" style="left:35.8px;top:359.2px;width:3.400px;height:3.400px;border-radius:2px;background:#f54a4f"></div><div class="p" style="left:68.2px;top:238.7px;width:330px;height:14px;line-height:14px">学生开始动手实践，按照老师的讲解和书上的步骤，编写宇宙飞船的程序，包括</div><div class="p" style="left:68.2px;top:255.2px;width:330px;height:14px;line-height:14px">变量设置、代码顺序等。老师鼓励学生互相帮助，并提醒学生注意保存自己</div><div class="p" style="left:68.2px;top:271.7px;width:330px;height:14px;line-height:14px">的作品，并让其他同学评价和补充。</div><div class="abs" style="left:68.1px;top:292.0px;width:87px;height:58.800px;background:#f5f7fc;border-radius:5px"></div><div class="t" style="left:80.8px;top:306.5px;color:#a5abb6">29:45</div><div class="t" style="left:80.8px;top:325.0px;color:#3a4150">教师讲解</div>
  <div class="t" style="left:23.5px;top:369.4px;color:#6a31d2;font-size:10.670px;letter-spacing:.25px">30:03</div><div class="abs b" style="left:67.8px;top:366.2px;width:55px;height:18px;background:#6a31d2;border-radius:3px;color:#fff;font-size:12px;line-height:19.5px;text-align:center;overflow:hidden">调试环节</div><div class="abs" style="left:131.5px;top:370.7px;width:1px;height:9px;background:#eceef2"></div><div class="abs" style="left:141.3px;top:372.0px;width:69px;height:6.600px;border-radius:4px;background:#ecdfff;border:0.800px solid #d3b9f8"></div><div class="abs" style="left:141.3px;top:372.0px;width:14.5px;height:6.600px;border-radius:4px;background:#6a31d2"></div><div class="t" style="left:219.2px;top:369.4px;color:#b0b5bf">时长 08:07</div><div class="t" style="left:281.5px;top:369.4px;color:#b0b5bf">占比:19.99%</div><div class="abs" style="left:35.8px;top:389.0px;width:3.400px;height:3.400px;border-radius:2px;background:#6a31d2"></div><div class="abs" style="left:37.0px;top:393.2px;width:0;height:121px;border-left:1px dotted #d3b9f8"></div><div class="abs" style="left:35.8px;top:514.7px;width:3.400px;height:3.400px;border-radius:2px;background:#6a31d2"></div><div class="p" style="left:68.2px;top:394.2px;width:330px;height:14px;line-height:14px">老师引导学生对代码进行调试和优化，强调养成注释代码的习惯，并要求学</div><div class="p" style="left:68.2px;top:410.7px;width:330px;height:14px;line-height:14px">生根据老师的指导，对自己的代码进行注释和优化。老师提醒学生保存作品</div><div class="abs" style="left:68.1px;top:447.5px;width:87px;height:58.800px;background:#f5f7fc;border-radius:5px"></div><div class="t" style="left:80.8px;top:462.0px;color:#a5abb6">35:15</div><div class="t" style="left:80.8px;top:480.5px;color:#3a4150">学生练习</div>
</div>
<div id="ai">
  <div class="abs" style="left:0;top:0;width:330px;height:42.500px;background:linear-gradient(180deg,rgba(255,255,255,0) 0%,rgba(255,255,255,.15) 40%,rgba(255,255,255,.62) 100%),linear-gradient(90deg,#a588fb 0%,#b09cfc 25%,#c3c8fe 42%,#b9d3ff 55%,#9cc1ff 68%,#8db8ff 82%,#a8caff 100%)"></div>
  <svg class="abs" style="left:0;top:0" width="330" height="43" viewBox="0 0 330 43">
    <path d="M121 42.500C119.500 30 116 18 113 11.500C115.500 7.500 119 6.300 124 6.300H200.500C206 6.300 208.500 8.500 210 13L217 36C218 39.500 219.500 42.500 224 42.500z" fill="rgba(255,255,255,.5)"/>
    <path d="M0 43V19C0 11 5 6.300 12.500 6.300H100.500C106 6.300 109 8.500 110.500 13.500L117.300 36.500C118.300 40 120 42.500 124 42.500V43z" fill="#fff"/>
  </svg>
  <!-- robot icon -->
  <svg class="abs" style="left:31.4px;top:17.6px" width="14" height="13" viewBox="0 0 14 13"><path d="M7 .8v2.500" stroke="#cddcff" stroke-width=".7"/><circle cx="7" cy=".9" r=".6" fill="#dbe6ff"/><ellipse cx="7" cy="8.600" rx="6" ry="4.400" fill="#dce8ff"/><rect x=".2" y="5.600" width="2.600" height="4.800" rx="1.200" fill="#4b8bff"/><rect x="11.200" y="5.600" width="2.600" height="4.800" rx="1.200" fill="#4b8bff"/><ellipse cx="7" cy="7.900" rx="4.600" ry="3.600" fill="#15223c"/><path d="M4.300 8.300L4.900 6.900H6.300L6.500 8.300zM7.500 8.300L7.700 6.900H9.100L9.700 8.300z" fill="#35cfc6"/></svg>
  <div id="aitab1" class="abs b" style="left:52.4px;top:17.7px;font-size:12px;line-height:16px;color:#262b38"><span style="font-size:1.08em;letter-spacing:.1px;line-height:1">AI</span>问答</div>
  <!-- note icon -->
  <svg class="abs" style="left:141.9px;top:18.3px" width="15" height="13" viewBox="0 0 15 13"><defs><linearGradient id="gn" x1="0" y1=".3" x2="1" y2=".2"><stop offset="0" stop-color="#1d56ff"/><stop offset="1" stop-color="#4f9bff"/></linearGradient></defs><rect x="1.200" y="1.600" width="9.300" height="9.300" rx="2.300" transform="rotate(-15 5.800 6.200)" fill="url(#gn)"/><circle cx="10.300" cy="7.700" r="3.900" fill="#d3e2ff" opacity=".93"/><path d="M8.300 10C8.500 7.600 9.900 5.800 12.400 5.200C12.300 7.700 10.900 9.400 8.300 10z" fill="#fff"/></svg>
  <div id="aitab2" class="abs b" style="left:163.3px;top:17.7px;font-size:12px;line-height:16px;color:#262b38">笔记</div>
  <div id="fold" class="t" style="left:273.6px;top:20.2px;color:#3a4150;font-size:10.4px">收起</div>
  <svg class="abs" style="left:303.4px;top:19.3px" width="12" height="11" viewBox="0 0 12 11" fill="none" stroke="#4a5160" stroke-width="1.100"><path d="M3.500 8.200H1.800Q.7 8.200 .7 7.100V1.800Q.7 .7 1.800 .7H8.700Q9.800 .7 9.800 1.800V3.500"/><rect x="5.300" y="5.300" width="6" height="4.800" rx="1"/></svg>
  <div id="aihello" class="abs b" style="left:15.2px;top:60.5px;font-size:15.500px;line-height:21px;color:#262b38">你好！欢迎使用AI问答工具~</div>
  <svg class="abs" style="left:15.5px;top:98.7px" width="11" height="11" viewBox="0 0 11 11"><rect width="10.300" height="10.300" rx="2.300" fill="url(#gai)"/><path d="M2.200 5.400L3.300 2.500L4.400 5.400M2.600 4.500h1.400M5.600 2.500v2.900" stroke="#fff" stroke-width=".8" fill="none"/><path d="M5.500 7.500h3.200" stroke="#dce9ff" stroke-width=".9"/></svg>
  <div id="hint1" class="t" style="left:32.3px;top:97.8px;color:#b9bec8">您可以向<span class="fw" style="text-align:right">“</span>AI问答工具<span class="fw" style="text-align:left">”</span>提问关于本堂课的问题，可以参考</div>
  <div id="hint2" class="t" style="left:32.3px;top:115.3px;color:#b9bec8">如下示例~</div>
  <div class="sug" style="top:140.6px"><div class="t" style="left:17.100px;top:12.400px;color:#2f343c">教师在代码调试环节邀请学生演示并讲解操作步骤...</div>
    <svg class="abs" style="left:268.800px;top:12.300px" width="11" height="11" viewBox="0 0 11 11" fill="none" stroke="#3a4150" stroke-width="1"><circle cx="5.500" cy="5.500" r="4.400"/><path d="M4.700 3.500L6.700 5.500L4.700 7.500"/></svg></div>
  <div class="sug" style="top:183.4px"><div class="t" style="left:17.100px;top:12.400px;color:#2f343c">课堂结尾播放中国空间站视频与编程主题的关联性...</div>
    <svg class="abs" style="left:268.800px;top:12.300px" width="11" height="11" viewBox="0 0 11 11" fill="none" stroke="#3a4150" stroke-width="1"><circle cx="5.500" cy="5.500" r="4.400"/><path d="M4.700 3.500L6.700 5.500L4.700 7.500"/></svg></div>
  <div class="sug" style="top:226.2px"><div class="t" style="left:17.100px;top:12.400px;color:#2f343c">整节课中教师频繁使用<span class="fw" style="text-align:right">‘</span>保存作品<span class="fw" style="text-align:left">’</span>的提醒，这种...</div>
    <svg class="abs" style="left:268.800px;top:12.300px" width="11" height="11" viewBox="0 0 11 11" fill="none" stroke="#3a4150" stroke-width="1"><circle cx="5.500" cy="5.500" r="4.400"/><path d="M4.700 3.500L6.700 5.500L4.700 7.500"/></svg></div>
  <div class="abs" style="left:15.6px;top:428px;width:302px;height:69.800px;border:1px solid #eceef3;border-radius:9px"></div>
  <div id="ph" class="t" style="left:28.6px;top:436.5px;color:#b3b8c2">请输入您想要提问的问题<span style="padding:0 .7px">/</span>选择文件</div>
  <svg class="abs" style="left:243.6px;top:466.3px" width="12" height="13" viewBox="0 0 12 13" fill="none" stroke="#4a5160" stroke-width="1"><path d="M10.300 5.300L5.700 10.500C4.700 11.600 3.100 11.600 2.200 10.700C1.300 9.800 1.300 8.300 2.200 7.300L7.400 1.700C8 1 9.100 1 9.700 1.600C10.300 2.200 10.300 3.200 9.700 3.900L5 9C4.700 9.300 4.200 9.300 3.900 9C3.600 8.700 3.600 8.200 3.900 7.900L8.100 3.300"/></svg>
  <div class="abs" style="left:270.9px;top:468px;width:1px;height:9px;background:#e6e9ee"></div>
  <div class="abs" style="left:280.4px;top:460.4px;width:24.400px;height:24.400px;border-radius:13px;background:#8ecbff"></div>
  <svg class="abs" style="left:286.6px;top:466.3px" width="12" height="13" viewBox="0 0 12 13" fill="none" stroke="#fff" stroke-width="1.500" stroke-linecap="round" stroke-linejoin="round"><path d="M6 12V1.500M1.500 6L6 1.500L10.500 6"/></svg>
  <div id="foot" class="t" style="left:93.2px;top:503.2px;font-size:9.15px;color:#ccd0d7">问答内容由AI大模型生成，仅供参考</div>
</div>
</div>
</body>
</html>
